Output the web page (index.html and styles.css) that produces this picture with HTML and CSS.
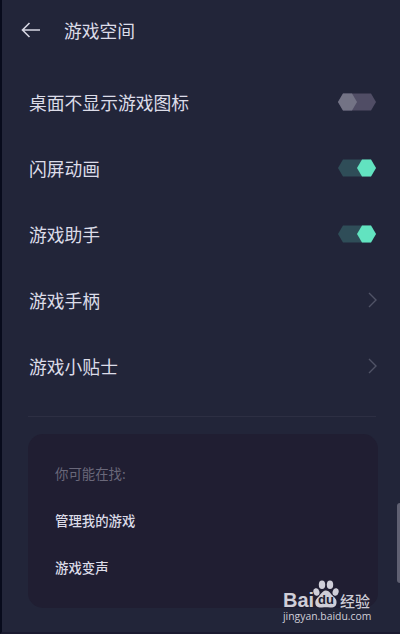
FILE: index.html
```html
<!DOCTYPE html>
<html lang="zh-CN">
<head>
  <meta charset="UTF-8">
  <meta name="viewport" content="width=device-width, initial-scale=1.0">
  <title>游戏空间</title>
  <link rel="stylesheet" href="styles.css">
</head>
<body>
  <div class="screen">
    <header class="header">
      <svg class="back" width="20" height="18" viewBox="0 0 20 18">
        <path d="M8.5 2 L1.5 9 L8.5 16 M1.5 9 H19"/>
      </svg>
      <h1>游戏空间</h1>
    </header>

    <ul class="settings">
      <li>
        <span>桌面不显示游戏图标</span>
        <svg class="switch off" width="40" height="20" viewBox="0 0 40 20">
          <path class="track" d="M6 1.5 H34 L39 10 L34 18.5 H6 L1 10 Z"/>
          <path class="knob" d="M6 1.5 H15 L20 10 L15 18.5 H6 L1 10 Z"/>
        </svg>
      </li>
      <li>
        <span>闪屏动画</span>
        <svg class="switch on" width="40" height="20" viewBox="0 0 40 20">
          <path class="track" d="M6 1.5 H34 L39 10 L34 18.5 H6 L1 10 Z"/>
          <path class="knob" d="M25 1.5 H34 L39 10 L34 18.5 H25 L20 10 Z"/>
        </svg>
      </li>
      <li>
        <span>游戏助手</span>
        <svg class="switch on" width="40" height="20" viewBox="0 0 40 20">
          <path class="track" d="M6 1.5 H34 L39 10 L34 18.5 H6 L1 10 Z"/>
          <path class="knob" d="M25 1.5 H34 L39 10 L34 18.5 H25 L20 10 Z"/>
        </svg>
      </li>
      <li>
        <span>游戏手柄</span>
        <svg class="chevron" width="9" height="16" viewBox="0 0 9 16"><path d="M1 1 L8 8 L1 15"/></svg>
      </li>
      <li>
        <span>游戏小贴士</span>
        <svg class="chevron" width="9" height="16" viewBox="0 0 9 16"><path d="M1 1 L8 8 L1 15"/></svg>
      </li>
    </ul>

    <div class="divider"></div>

    <section class="related">
      <h2>你可能在找:</h2>
      <p>管理我的游戏</p>
      <p>游戏变声</p>
    </section>

    <div class="edge-handle"></div>

    <div class="watermark">
      <div class="brand">
        <span class="bai">Bai</span>
        <span class="paw">
          <svg width="26" height="28" viewBox="0 0 26 28">
            <ellipse cx="3.4" cy="12" rx="3" ry="3.8" transform="rotate(-15 3.4 12)"/>
            <ellipse cx="9" cy="4.8" rx="3.2" ry="4.3"/>
            <ellipse cx="17" cy="4.8" rx="3.2" ry="4.3"/>
            <ellipse cx="22.6" cy="12" rx="3" ry="3.8" transform="rotate(15 22.6 12)"/>
            <path d="M13 10.5 C16 10.5 17.5 13.5 19.5 15.5 C22 18 24 19.5 23.5 23 C23 27 20 28 17 27.5 C14 27 12 27 9 27.5 C6 28 2.5 27 2.3 23 C2.2 19.5 4.5 18 6.5 15.5 C8.5 13.2 10 10.5 13 10.5 Z"/>
          </svg>
          <b>du</b>
        </span>
        <span class="jingyan">经验</span>
      </div>
      <div class="url">jingyan.baidu.com</div>
    </div>
  </div>
</body>
</html>
```

FILE: styles.css
```css
* {
  box-sizing: border-box;
  margin: 0;
  padding: 0;
}

body {
  background: #222539;
  font-family: "Noto Sans CJK SC", sans-serif;
  color: #dcdce8;
}

.screen {
  position: relative;
  height: 634px;
  border-left: 2px solid #080b1c;
  border-bottom: 2px solid #1b1b30;
  padding: 0 22px 0 26px;
  overflow: hidden;
}

.header {
  display: flex;
  align-items: center;
  gap: 23px;
  height: 60px;
  margin-left: -7px;
}

.header h1 {
  font-size: 17.8px;
  font-weight: 400;
}

.back,
.chevron {
  fill: none;
  stroke: #d6d6e2;
  stroke-width: 1.6;
}

.settings {
  list-style: none;
  padding-top: 9px;
}

.settings li {
  display: flex;
  align-items: center;
  justify-content: space-between;
  height: 66px;
  padding: 0 1px 0 1px;
  font-size: 17.8px;
}

.chevron {
  stroke: #505366;
  stroke-width: 1.4;
}

.off .track {
  fill: #504d65;
}

.off .knob {
  fill: #737385;
}

.on .track {
  fill: #2f4d58;
}

.on .knob {
  fill: #62e3c0;
}

.divider {
  height: 1px;
  margin: 17px 2px 0 0;
  background: #2d2f43;
}

.related {
  height: 174px;
  margin-top: 17px;
  padding: 16px 27px;
  border-radius: 15px;
  background: #201e32;
  font-size: 13.4px;
  line-height: 47px;
}

.related h2 {
  color: #6a687a;
  font-size: 13.4px;
  font-weight: 400;
}

.related p {
  font-weight: 500;
}

.edge-handle {
  position: absolute;
  top: 503px;
  right: 0;
  width: 3px;
  height: 80px;
  border-radius: 3px 0 0 3px;
  background: #5f6072;
}

.watermark {
  position: absolute;
  top: 580px;
  left: 281px;
  color: #cfced8;
}

.brand {
  display: flex;
  align-items: flex-end;
  height: 28px;
}

.bai {
  width: 30px;
  font: bold 20px/15px "Liberation Sans", sans-serif;
}

.paw {
  position: relative;
  width: 26px;
  height: 28px;
}

.paw svg {
  display: block;
  fill: #cfced8;
}

.paw b {
  position: absolute;
  top: 13px;
  left: 0;
  width: 26px;
  color: #201e32;
  font: bold 13px/14px "Liberation Sans", sans-serif;
  text-align: center;
}

.jingyan {
  margin-left: 1px;
  font-size: 15px;
  font-weight: 500;
  line-height: 15px;
}

.url {
  margin-top: 1px;
  font: 10.4px/14px "Open Sans", sans-serif;
}
```
